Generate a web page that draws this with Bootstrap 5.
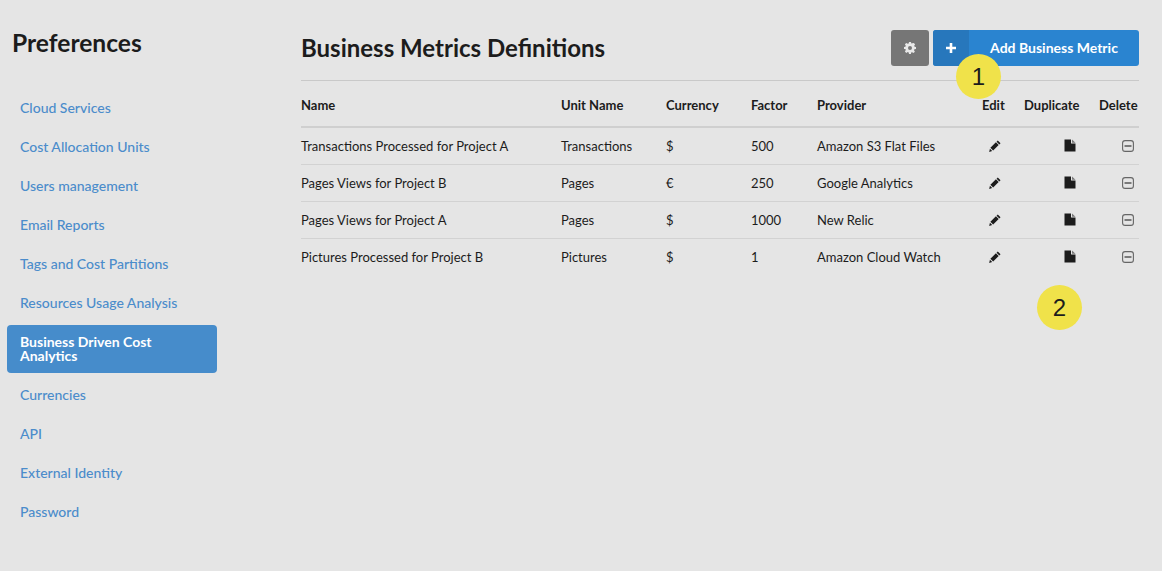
<!DOCTYPE html>
<html lang="en">
<head>
<meta charset="utf-8">
<title>Business Metrics Definitions</title>
<link href="https://cdn.jsdelivr.net/npm/bootstrap@5.3.0/dist/css/bootstrap.min.css" rel="stylesheet">
<style>
html,body{height:100%}
body{background:#e5e5e5;color:#1c1c1c;font-family:Lato,"Liberation Sans",sans-serif;font-size:13px;overflow:hidden}
.shell{width:1162px;height:571px;position:relative}
.side{width:301px;flex:none;padding-left:7px}
.side-title{font-size:24.6px;font-weight:700;line-height:30px;margin:0 0 33px 5px;padding-top:28px;color:#1c1c1c}
.side .nav{width:210px;gap:5px}
.side .nav-link{color:#4b8ccb;font-size:14px;line-height:14px;padding:10px 13px;border-radius:4px;font-weight:500}
.side .nav-link.active{background:#468ccb;color:#fff;font-weight:700}
.main-pane{width:838px;flex:none;padding-top:30px}
.head-row{height:51px;border-bottom:1px solid #c9c9c9}
.page-title{font-size:24px;font-weight:700;line-height:36px;margin:0;color:#1c1c1c}
.gear-btn{width:38px;height:36px;background:#767676;border:0;border-radius:3px;padding:0;display:flex;align-items:center;justify-content:center}
.add-btn{width:206px;height:36px;background:#2a84d0;border:0;border-radius:3px;padding:0;color:#fff;font-weight:700;font-size:14px;display:flex;overflow:hidden}
.add-plus{width:36px;height:36px;background:#2777bc;display:flex;align-items:center;justify-content:center;flex:none}
.add-text{flex:1;text-align:center;line-height:36px}
.metrics{table-layout:fixed;width:838px;margin:0;--bs-table-bg:transparent;--bs-table-color:#1c1c1c;font-size:13px}
.metrics th{height:46px;padding:4px 0 0;vertical-align:middle;font-weight:700;border-bottom:2px solid #cfcfcf;white-space:nowrap}
.metrics td{height:37px;padding:2px 0 0;vertical-align:middle;border-bottom:1px solid #d2d2d2;white-space:nowrap}
.metrics tr:last-child td{border-bottom:0}
.metrics svg{display:block;margin-top:-2px}
.metrics td.ico-edit{padding-left:7px}
.metrics td.ico-dup{padding-left:40px}
.metrics td.ico-del{padding-left:23px}
.callout{position:absolute;width:45px;height:45px;border-radius:50%;background:#f0e24a;color:#1c1c1c;font-family:"Liberation Sans",sans-serif;font-size:24px;line-height:45px;text-align:center}
.c-one{left:956px;top:54px}
.c-two{left:1037px;top:285px}
</style>
</head>
<body>
<div class="shell d-flex">
  <aside class="side">
    <h2 class="side-title">Preferences</h2>
    <nav class="nav flex-column">
      <a class="nav-link" href="#">Cloud Services</a>
      <a class="nav-link" href="#">Cost Allocation Units</a>
      <a class="nav-link" href="#">Users management</a>
      <a class="nav-link" href="#">Email Reports</a>
      <a class="nav-link" href="#">Tags and Cost Partitions</a>
      <a class="nav-link" href="#">Resources Usage Analysis</a>
      <a class="nav-link active" href="#">Business Driven Cost Analytics</a>
      <a class="nav-link" href="#">Currencies</a>
      <a class="nav-link" href="#">API</a>
      <a class="nav-link" href="#">External Identity</a>
      <a class="nav-link" href="#">Password</a>
    </nav>
  </aside>
  <main class="main-pane">
    <div class="head-row d-flex justify-content-between align-items-start">
      <h1 class="page-title">Business Metrics Definitions</h1>
      <div class="d-flex gap-1">
        <button class="btn gear-btn" type="button" aria-label="Settings">
          <svg width="12" height="12" viewBox="0 0 12 12"><path fill="#e8e8e8" fill-rule="evenodd" d="M5 0h2l.3 1.6 1-.4L9.700.9l1.400 1.400-.9 1.400.4 1 1.400.3v2l-1.600.3-.4 1 .9 1.400-1.400 1.400-1.400-.9-1 .4L7 12H5l-.3-1.600-1-.4-1.400.9L.9 9.500l.9-1.400-.4-1L0 6.900V5l1.400-.3.4-1L.9 2.300 2.300.9l1.400.9 1-.4zM6 4a2 2 0 1 0 0 4 2 2 0 0 0 0-4z"/></svg>
        </button>
        <button class="btn add-btn" type="button">
          <span class="add-plus"><svg width="10" height="10" viewBox="0 0 10 10"><path fill="#fff" d="M3.700 0h2.600v3.700H10v2.600H6.300V10H3.700V6.300H0V3.700h3.700z"/></svg></span>
          <span class="add-text">Add Business Metric</span>
        </button>
      </div>
    </div>
    <table class="table metrics">
      <colgroup><col style="width:260px"><col style="width:105px"><col style="width:85px"><col style="width:66px"><col style="width:165px"><col style="width:42px"><col style="width:75px"><col style="width:40px"></colgroup>
      <thead>
        <tr><th>Name</th><th>Unit Name</th><th>Currency</th><th>Factor</th><th>Provider</th><th>Edit</th><th>Duplicate</th><th>Delete</th></tr>
      </thead>
      <tbody id="rows"></tbody>
    </table>
  </main>
</div>
<div class="callout c-one">1</div>
<div class="callout c-two">2</div>
<script>
var pencil='<svg width="12" height="12" viewBox="0 0 13 13"><path fill="#1c1c1c" d="M9.500.5l3 3-1.300 1.300-3-3zM7.500 2.500l3 3-6 6-3-3zM1 9.500l2.500 2.500-3.300.9z"/></svg>';
var doc='<svg width="12" height="13" viewBox="0 0 12 13"><path fill="#1c1c1c" d="M.5.500H7v4h4.500v8H.5z"/><path fill="#777" d="M8 .5l3.500 3.300H8z"/></svg>';
var minus='<svg width="12" height="12" viewBox="0 0 12 12"><rect x=".6" y=".6" width="10.800" height="10.800" rx="2.500" fill="none" stroke="#666" stroke-width="1.100"/><path stroke="#333" stroke-width="1.200" d="M2.500 6h7"/></svg>';
var data=[["Transactions Processed for Project A","Transactions","$","500","Amazon S3 Flat Files"],["Pages Views for Project B","Pages","€","250","Google Analytics"],["Pages Views for Project A","Pages","$","1000","New Relic"],["Pictures Processed for Project B","Pictures","$","1","Amazon Cloud Watch"]];
document.getElementById('rows').innerHTML=data.map(function(r){return '<tr>'+r.map(function(c){return '<td>'+c+'</td>'}).join('')+'<td class="ico-edit">'+pencil+'</td><td class="ico-dup">'+doc+'</td><td class="ico-del">'+minus+'</td></tr>'}).join('');
</script>
<script src="https://cdn.jsdelivr.net/npm/bootstrap@5.3.0/dist/js/bootstrap.bundle.min.js"></script>
</body>
</html>
